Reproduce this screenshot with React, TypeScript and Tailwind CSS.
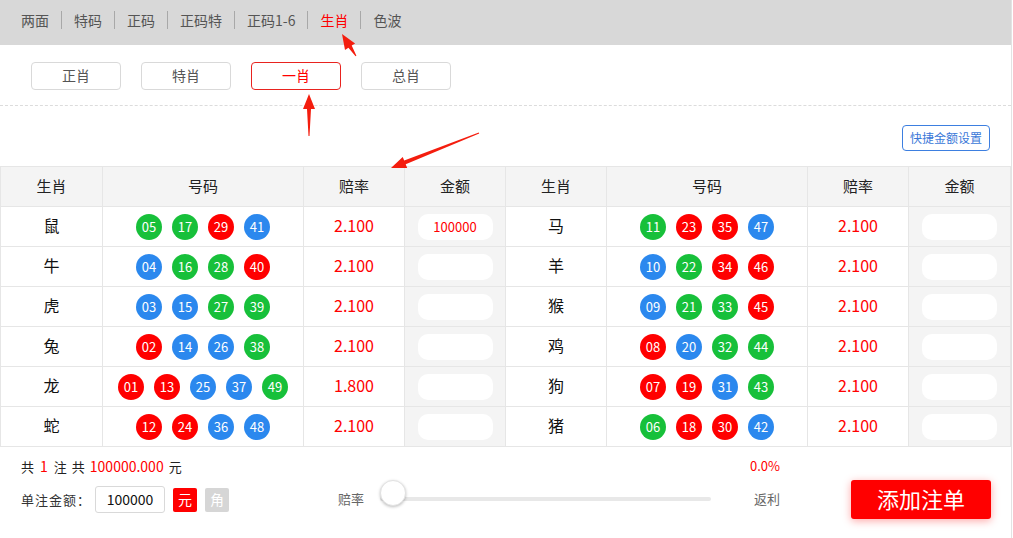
import React from 'react';

const RED = ['01', '02', '07', '08', '12', '13', '18', '19', '23', '24', '29', '30', '34', '35', '40', '45', '46'];
const BLUE = ['03', '04', '09', '10', '14', '15', '20', '25', '26', '31', '36', '37', '41', '42', '47', '48'];

const ballClass = (n: string) =>
  RED.includes(n) ? 'bg-[#ff0000]' : BLUE.includes(n) ? 'bg-[#2b88ee]' : 'bg-[#17c03a]';

type Row = { name: string; nums: string[]; odds: string; amount?: string };

const LEFT: Row[] = [
  { name: '鼠', nums: ['05', '17', '29', '41'], odds: '2.100', amount: '100000' },
  { name: '牛', nums: ['04', '16', '28', '40'], odds: '2.100' },
  { name: '虎', nums: ['03', '15', '27', '39'], odds: '2.100' },
  { name: '兔', nums: ['02', '14', '26', '38'], odds: '2.100' },
  { name: '龙', nums: ['01', '13', '25', '37', '49'], odds: '1.800' },
  { name: '蛇', nums: ['12', '24', '36', '48'], odds: '2.100' },
];

const RIGHT: Row[] = [
  { name: '马', nums: ['11', '23', '35', '47'], odds: '2.100' },
  { name: '羊', nums: ['10', '22', '34', '46'], odds: '2.100' },
  { name: '猴', nums: ['09', '21', '33', '45'], odds: '2.100' },
  { name: '鸡', nums: ['08', '20', '32', '44'], odds: '2.100' },
  { name: '狗', nums: ['07', '19', '31', '43'], odds: '2.100' },
  { name: '猪', nums: ['06', '18', '30', '42'], odds: '2.100' },
];

const TABS = ['两面', '特码', '正码', '正码特', '正码1-6', '生肖', '色波'];
const SUBTABS = ['正肖', '特肖', '一肖', '总肖'];

// tapered annotation arrow, tail -> tip
const arrowPoints = (tx: number, ty: number, hx: number, hy: number) => {
  const dx = hx - tx;
  const dy = hy - ty;
  const len = Math.hypot(dx, dy);
  const ux = dx / len;
  const uy = dy / len;
  const px = -uy;
  const py = ux;
  const headLen = 15;
  const bx = hx - ux * headLen;
  const by = hy - uy * headLen;
  const pts = [
    [tx + px * 0.5, ty + py * 0.5],
    [bx + px * 2, by + py * 2],
    [bx + px * 6, by + py * 6],
    [hx, hy],
    [bx - px * 6, by - py * 6],
    [bx - px * 2, by - py * 2],
    [tx - px * 0.5, ty - py * 0.5],
  ];
  return pts.map((p) => `${p[0].toFixed(1)},${p[1].toFixed(1)}`).join(' ');
};

const Cells: React.FC<{ row: Row }> = ({ row }) => (
  <>
    <td className="border border-[#e6e6e6] pb-[3px] text-center text-[16px] text-[#111]">{row.name}</td>
    <td className="border border-[#e6e6e6]">
      <div className="flex items-center justify-center gap-[10px]">
        {row.nums.map((n) => (
          <span
            key={n}
            className={`flex h-[26px] w-[26px] items-center justify-center rounded-full text-[13px] text-white ${ballClass(n)}`}
          >
            {n}
          </span>
        ))}
      </div>
    </td>
    <td className="border border-[#e6e6e6] pb-[3px] text-center text-[16px] text-[#ff0000]">{row.odds}</td>
    <td className="border border-[#e6e6e6] bg-[#f4f4f4]">
      <div className="mx-auto flex h-[26px] w-[75px] items-center justify-center rounded-[10px] bg-white text-[13px] text-[#ff0000]">
        {row.amount || ''}
      </div>
    </td>
  </>
);

export default function App() {
  return (
    <div
      className="relative h-[538px] w-[1013px] overflow-hidden bg-white"
      style={{ fontFamily: '"Noto Sans CJK SC", "Noto Sans", sans-serif' }}
    >
      <div className="h-full w-[1012px] border-r border-[#e3e3e3]">
        {/* top tabs */}
        <div className="flex h-[45px] items-center bg-[#d8d8d8] pb-[5px] pl-[9px]">
          {TABS.map((t, i) => (
            <span
              key={t}
              className={`px-3 text-[14px] leading-[18px] ${i > 0 ? 'border-l border-[#a8a8a8]' : ''} ${
                t === '生肖' ? 'text-[#ff0000]' : 'text-[#555]'
              }`}
            >
              {t}
            </span>
          ))}
        </div>

        {/* sub tabs */}
        <div className="flex gap-[20px] border-b border-dashed border-[#dcdcdc] pb-[15px] pl-[31px] pt-[17px]">
          {SUBTABS.map((t) => (
            <div
              key={t}
              className={`flex h-[28px] w-[90px] items-center justify-center rounded-[4px] border pb-[2px] text-[14px] ${
                t === '一肖' ? 'border-[#e8231f] text-[#ff0000]' : 'border-[#d9d9d9] text-[#555]'
              }`}
            >
              {t}
            </div>
          ))}
        </div>

        <div className="flex justify-end pb-[15px] pr-[21px] pt-[19px]">
          <div className="flex h-[26px] items-center rounded-[4px] border border-[#3d7fe0] px-[7px] text-[12px] text-[#3a78d8]">
            快捷金额设置
          </div>
        </div>

        {/* table */}
        <table className="w-[1011px] table-fixed border-collapse">
          <colgroup>
            <col className="w-[102px]" />
            <col className="w-[201px]" />
            <col className="w-[101px]" />
            <col className="w-[101px]" />
            <col className="w-[101px]" />
            <col className="w-[201px]" />
            <col className="w-[101px]" />
            <col />
          </colgroup>
          <thead>
            <tr className="h-[40px] bg-[#f4f4f4] text-[15px] text-[#222]">
              {['生肖', '号码', '赔率', '金额', '生肖', '号码', '赔率', '金额'].map((h, i) => (
                <th key={i} className="border border-[#e6e6e6] font-normal">
                  {h}
                </th>
              ))}
            </tr>
          </thead>
          <tbody>
            {LEFT.map((row, i) => (
              <tr key={row.name} className="h-[40px]">
                <Cells row={row} />
                <Cells row={RIGHT[i]} />
              </tr>
            ))}
          </tbody>
        </table>

        {/* footer */}
        <div className="flex items-start pl-[21px] pt-[9px]">
          <div className="w-[317px]">
            <div className="text-[13px] leading-[20px] text-[#222]">
              共<span className="mx-[6px] text-[14px] text-[#ff0000]">1</span>注<span className="ml-[5px]">共</span>
              <span className="mx-[5px] text-[14px] text-[#ff0000]">100000.000</span>元
            </div>
            <div className="mt-[9px] flex items-center text-[13px] text-[#333]">
              <span className="tracking-[1px]">单注金额：</span>
              <div className="ml-[4px] flex h-[27px] w-[70px] items-center justify-center rounded-[3px] border border-[#d9d9d9] text-[14px] text-[#111]">
                100000
              </div>
              <span className="ml-[8px] flex h-[24px] w-[24px] items-center justify-center rounded-[2px] bg-[#ff0000] text-[14px] text-white">
                元
              </span>
              <span className="ml-[8px] flex h-[24px] w-[24px] items-center justify-center rounded-[2px] bg-[#d6d6d6] text-[14px] text-white">
                角
              </span>
            </div>
          </div>

          <div className="w-[442px]">
            <div className="text-right text-[13px] leading-[20px] text-[#ff0000]">0.0%</div>
            <div className="mt-[9px] flex h-[27px] items-center">
              <span className="text-[13px] text-[#666]">赔率</span>
              <div className="relative ml-[16px] flex h-[26px] w-[331px] items-center">
                <div className="h-[4px] w-full rounded-full bg-[#e8e8e8]" />
                <div className="absolute -top-[6px] left-0 h-[26px] w-[26px] rounded-full border border-[#e2e2e2] bg-white shadow-[0_1px_3px_rgba(0,0,0,0.25)]" />
              </div>
              <span className="ml-auto text-[13px] text-[#666]">返利</span>
            </div>
          </div>

          <div className="ml-[71px] mt-[24px] flex h-[39px] w-[140px] items-center justify-center rounded-[3px] bg-[#ff0000] pb-[2px] text-[22px] text-white shadow-[0_2px_8px_rgba(255,0,0,0.35)]">
            添加注单
          </div>
        </div>
      </div>

      {/* annotation arrows */}
      <svg className="pointer-events-none absolute left-0 top-0" width="1013" height="538">
        <polygon points={arrowPoints(356, 56, 342, 34)} fill="#f41d0e" />
        <polygon points={arrowPoints(309, 136, 309, 94)} fill="#f41d0e" />
        <polygon points={arrowPoints(479, 133, 391, 168)} fill="#f41d0e" />
      </svg>
    </div>
  );
}
